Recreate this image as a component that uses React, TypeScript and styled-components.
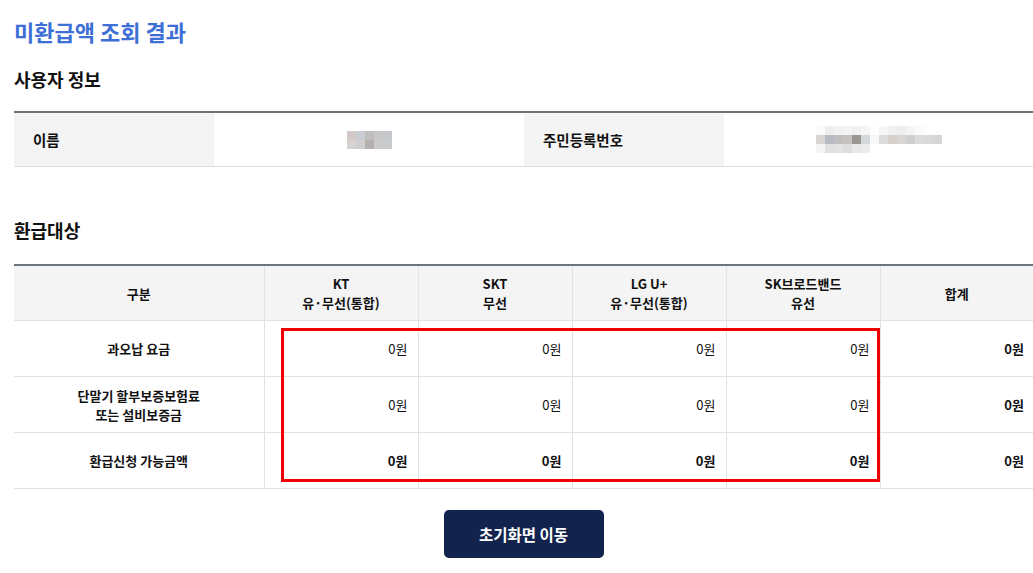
import React from 'react';
import styled, { createGlobalStyle } from 'styled-components';

const GlobalStyle = createGlobalStyle`
  body {
    margin: 0;
    background: #fff;
    font-family: "Noto Sans CJK KR", "Noto Sans", sans-serif;
    color: #111;
  }
`;

const providers = [
  { name: 'KT', sub: '유·무선(통합)' },
  { name: 'SKT', sub: '무선' },
  { name: 'LG U+', sub: '유·무선(통합)' },
  { name: 'SK브로드밴드', sub: '유선' },
];

const columnWidths = [250, 154, 154, 154, 154, 153];

const rows = [
  { label: ['과오납 요금'], bold: false },
  { label: ['단말기 할부보증보험료', '또는 설비보증금'], bold: false },
  { label: ['환급신청 가능금액'], bold: true },
];

// 개인정보 모자이크
const nameMosaic = [
  ['#d3c9c9', '#c9ccd2', '#c0bfbf', '#c8c8c8', '#c6c7ca'],
  ['#d6d2cf', '#cfcfcf', '#b5b0ad', '#cbcbcb', '#c9cacc'],
];

const idMosaic = [
  ['#fbfbfb', '#eeeeef', '#f2f2f2', '#f4f4f4', '#f1f1f2', '#f6f6f6', '#fefefe', '#f6f6f6', '#f0f0f0', '#eeeeee', '#f5f5f5', '#fafafa', '#fefefe', '#fefefe'],
  ['#d9d6d4', '#b7bcc2', '#bfbfbf', '#c5c2bf', '#999893', '#d5d8db', '#f7f7f7', '#dcdcdc', '#d6d0cc', '#d8d5d5', '#d0cfd0', '#dbdbdb', '#d8d8d8', '#d6d6d6'],
  ['#f5f5f5', '#e0e0e0', '#e2e2e2', '#dddddd', '#e8e8e8', '#ececec', '#ffffff', '#ffffff', '#ffffff', '#ffffff', '#ffffff', '#ffffff', '#ffffff', '#ffffff'],
];

const Mosaic = ({ cells, size }: { cells: string[][]; size: number }) => (
  <MosaicGrid $cols={cells[0].length} $size={size}>
    {cells.flat().map((c, idx) => (
      <Pixel key={idx} $color={c} />
    ))}
  </MosaicGrid>
);

export default function App() {
  return (
    <Page>
      <GlobalStyle />
      <Title>미환급액 조회 결과</Title>
      <SectionTitle>사용자 정보</SectionTitle>
      <InfoTable>
        <InfoLabel>이름</InfoLabel>
        <InfoValue>
          <Mosaic cells={nameMosaic} size={9} />
        </InfoValue>
        <InfoLabel>주민등록번호</InfoLabel>
        <InfoValue>
          <Mosaic cells={idMosaic} size={9} />
        </InfoValue>
      </InfoTable>

      <SectionTitle $gap>환급대상</SectionTitle>
      <TableWrap>
        <RefundTable>
          <colgroup>
            {columnWidths.map((w, idx) => (
              <Col key={idx} $w={w} />
            ))}
          </colgroup>
          <thead>
            <tr>
              <HeadCell>구분</HeadCell>
              {providers.map(({ name, sub }) => (
                <HeadCell key={name}>
                  {name}
                  <br />
                  {sub}
                </HeadCell>
              ))}
              <HeadCell $last>합계</HeadCell>
            </tr>
          </thead>
          <tbody>
            {rows.map(({ label, bold }, idx) => (
              <tr key={idx}>
                <RowLabel>
                  {label.map((l, i) => (
                    <div key={i}>{l}</div>
                  ))}
                </RowLabel>
                {providers.map(({ name }) => (
                  <Amount key={name} $bold={bold}>
                    0원
                  </Amount>
                ))}
                <Amount $bold $last>
                  0원
                </Amount>
              </tr>
            ))}
          </tbody>
        </RefundTable>
        <Highlight />
      </TableWrap>

      <Footer>
        <HomeButton>초기화면 이동</HomeButton>
      </Footer>
    </Page>
  );
}

const Page = styled.div`
  width: 1033px;
  padding: 16px 0 0 14px;
  box-sizing: border-box;
  overflow: hidden;
`;

const Title = styled.h1`
  margin: 0;
  font-size: 22px;
  line-height: 30px;
  font-weight: 700;
  color: #3d6fd6;
`;

const SectionTitle = styled.h2<{ $gap?: boolean }>`
  margin: ${({ $gap }) => ($gap ? '50px' : '20px')} 0 0;
  font-size: 18px;
  line-height: 26px;
  font-weight: 700;
  color: #111;
`;

const InfoTable = styled.div`
  margin-top: 19px;
  display: grid;
  grid-template-columns: 200px 310px 200px 1fr;
  border-top: 2px solid #6c747b;
  border-bottom: 1px solid #dedede;
  height: 56px;
  box-sizing: border-box;
`;

const InfoLabel = styled.div`
  background: #f4f4f4;
  display: flex;
  align-items: center;
  padding-left: 19px;
  font-size: 14.5px;
  font-weight: 700;
`;

const InfoValue = styled.div`
  display: flex;
  align-items: center;
  justify-content: center;
`;

const MosaicGrid = styled.div<{ $cols: number; $size: number }>`
  display: grid;
  grid-template-columns: repeat(${({ $cols }) => $cols}, ${({ $size }) => $size}px);
  grid-auto-rows: ${({ $size }) => $size}px;
  filter: blur(0.4px);
`;

const Pixel = styled.div<{ $color: string }>`
  background: ${({ $color }) => $color};
`;

const TableWrap = styled.div`
  position: relative;
  margin-top: 21px;
  width: 1019px;
`;

const RefundTable = styled.table`
  width: 1019px;
  table-layout: fixed;
  border-collapse: collapse;
  border-top: 2px solid #6c747b;
  font-size: 13px;
`;

const Col = styled.col<{ $w: number }>`
  width: ${({ $w }) => $w}px;
`;

const HeadCell = styled.th<{ $last?: boolean }>`
  height: 54px;
  padding: 0;
  background: #f4f4f4;
  font-weight: 700;
  line-height: 19px;
  text-align: center;
  border-bottom: 1px solid #dfe2e7;
  border-right: ${({ $last }) => ($last ? 'none' : '1px solid #dfe2e7')};
`;

const RowLabel = styled.td`
  height: 55px;
  padding: 0;
  text-align: center;
  font-weight: 700;
  line-height: 19px;
  border-bottom: 1px solid #dfe2e7;
  border-right: 1px solid #dfe2e7;
`;

const Amount = styled.td<{ $bold?: boolean; $last?: boolean }>`
  padding: 0 ${({ $last }) => ($last ? '9px' : '10px')} 0 0;
  text-align: right;
  font-weight: ${({ $bold }) => ($bold ? 700 : 400)};
  border-bottom: 1px solid #dfe2e7;
  border-right: ${({ $last }) => ($last ? 'none' : '1px solid #dfe2e7')};
`;

const Highlight = styled.div`
  position: absolute;
  left: 267px;
  top: 64px;
  width: 599px;
  height: 154px;
  border: 3px solid #f20000;
  box-sizing: border-box;
  pointer-events: none;
`;

const Footer = styled.div`
  display: flex;
  justify-content: center;
  margin-top: 21px;
`;

const HomeButton = styled.button`
  width: 160px;
  height: 48px;
  border: none;
  border-radius: 5px;
  background: #12244e;
  color: #fff;
  font-family: "Noto Sans CJK KR", "Noto Sans", sans-serif;
  font-size: 15.5px;
  font-weight: 700;
  cursor: pointer;
`;
